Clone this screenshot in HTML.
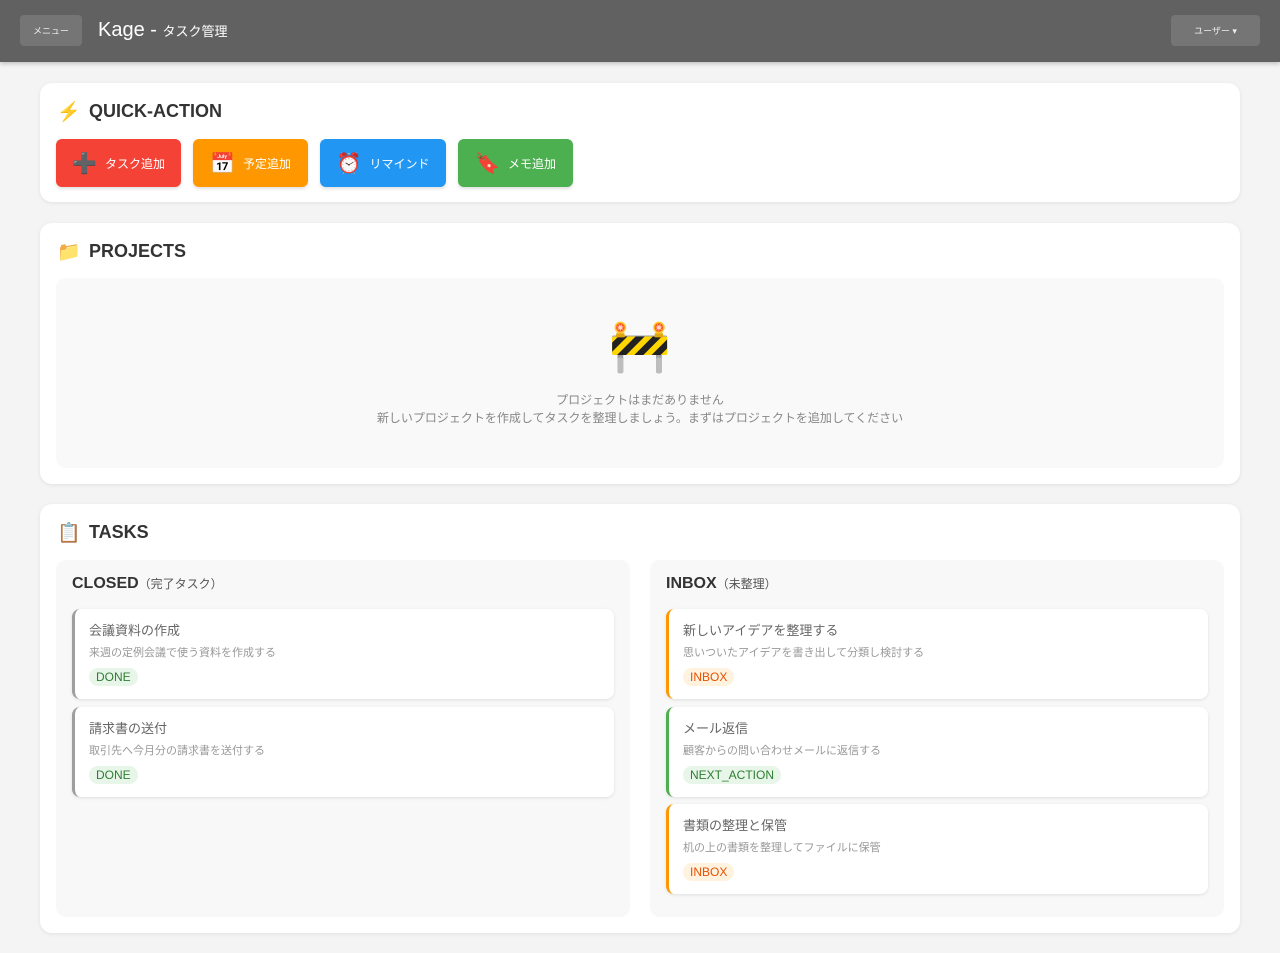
<!DOCTYPE html>
<html><head><meta charset="utf-8"><style>
*{box-sizing:border-box;margin:0;padding:0}
body{width:1280px;height:953px;background:#f4f4f4;font-family:"Liberation Sans","Noto Sans CJK JP",sans-serif;color:#333;overflow:hidden;position:relative}
.hdr{position:absolute;left:0;top:0;width:1280px;height:62px;background:#616161;box-shadow:0 2px 4px rgba(0,0,0,.2)}
.hb{position:absolute;top:15px;height:31px;background:#757575;border-radius:4px;color:#eee;font-size:9px;display:flex;align-items:center;justify-content:center}
.ttl{position:absolute;left:98px;top:19px;color:#fff;font-size:20px}
.card{position:absolute;left:40px;width:1200px;background:#fff;border-radius:12px;box-shadow:0 1px 4px rgba(0,0,0,.08)}
.h2{position:absolute;left:17px;font-size:18px;font-weight:bold;color:#333;display:flex;align-items:center;gap:8px}
.h2 .ic{font-size:19px;width:24px;font-family:"Noto Color Emoji","DejaVu Sans",sans-serif}
.btn{position:absolute;top:56px;height:48px;border-radius:6px;color:#fff;font-size:12px;display:flex;align-items:center;justify-content:center;gap:8px;box-shadow:0 2px 3px rgba(0,0,0,.12)}
.btn .ic{font-size:20px}
.empty{position:absolute;left:16px;top:55px;width:1168px;height:190px;background:#f9f9f9;border-radius:10px;text-align:center;color:#888}
.col{position:absolute;top:56px;width:574px;height:357px;background:#f8f8f8;border-radius:10px}
.ch{position:absolute;left:16px;top:15px;font-size:16px;font-weight:bold;color:#333}
.ch span{font-weight:normal;font-size:12px;color:#555}
.t{position:absolute;left:16px;width:542px;height:90px;background:#fff;border-radius:8px;border-left:3px solid #9e9e9e;box-shadow:0 1px 3px rgba(0,0,0,.1)}
.t .a{position:absolute;left:14px;top:11px;font-size:13px;color:#666}
.t .b{position:absolute;left:14px;top:35px;font-size:11px;color:#999}
.t .g{position:absolute;left:14px;top:59px;font-size:12px;padding:2px 7px;border-radius:9px}
.done{background:#e8f5e9;color:#2e7d32}
.inbox{background:#fff3e0;color:#e65100}
.na{background:#e8f5e9;color:#2e7d32}
</style></head><body>
<div class="hdr">
<div class="hb" style="left:20px;width:62px">メニュー</div>
<div class="ttl">Kage - <span style="font-size:13px">タスク管理</span></div>
<div class="hb" style="left:1171px;width:89px">ユーザー ▾</div>
</div>

<div class="card" style="top:83px;height:119px">
<div class="h2" style="top:17px"><span class="ic" style="color:#f5c518">⚡</span>QUICK-ACTION</div>
<div class="btn" style="left:16px;width:125px;background:#f44336"><span class="ic" style="color:#666">➕</span>タスク追加</div>
<div class="btn" style="left:153px;width:115px;background:#ff9800"><span class="ic">📅</span>予定追加</div>
<div class="btn" style="left:280px;width:126px;background:#2196f3"><span class="ic">⏰</span>リマインド</div>
<div class="btn" style="left:418px;width:115px;background:#4caf50"><span class="ic">🔖</span>メモ追加</div>
</div>

<div class="card" style="top:223px;height:261px">
<div class="h2" style="top:17px"><span class="ic">📁</span>PROJECTS</div>
<div class="empty">
<div style="font-size:50px;margin-top:38px;line-height:60px">🚧</div>
<div style="font-size:12px;margin-top:15px;line-height:18px">プロジェクトはまだありません<br>新しいプロジェクトを作成してタスクを整理しましょう。まずはプロジェクトを追加してください</div>
</div>
</div>

<div class="card" style="top:504px;height:429px">
<div class="h2" style="top:17px"><span class="ic">📋</span>TASKS</div>
<div class="col" style="left:16px">
<div class="ch">CLOSED<span>（完了タスク）</span></div>
<div class="t" style="top:49px"><div class="a">会議資料の作成</div><div class="b">来週の定例会議で使う資料を作成する</div><div class="g done">DONE</div></div>
<div class="t" style="top:147px"><div class="a">請求書の送付</div><div class="b">取引先へ今月分の請求書を送付する</div><div class="g done">DONE</div></div>
</div>
<div class="col" style="left:610px">
<div class="ch">INBOX<span>（未整理）</span></div>
<div class="t" style="top:49px;border-left-color:#ff9800"><div class="a">新しいアイデアを整理する</div><div class="b">思いついたアイデアを書き出して分類し検討する</div><div class="g inbox">INBOX</div></div>
<div class="t" style="top:147px;border-left-color:#4caf50"><div class="a">メール返信</div><div class="b">顧客からの問い合わせメールに返信する</div><div class="g na">NEXT_ACTION</div></div>
<div class="t" style="top:244px;border-left-color:#ff9800"><div class="a">書類の整理と保管</div><div class="b">机の上の書類を整理してファイルに保管</div><div class="g inbox">INBOX</div></div>
</div>
</div>
</body></html>
